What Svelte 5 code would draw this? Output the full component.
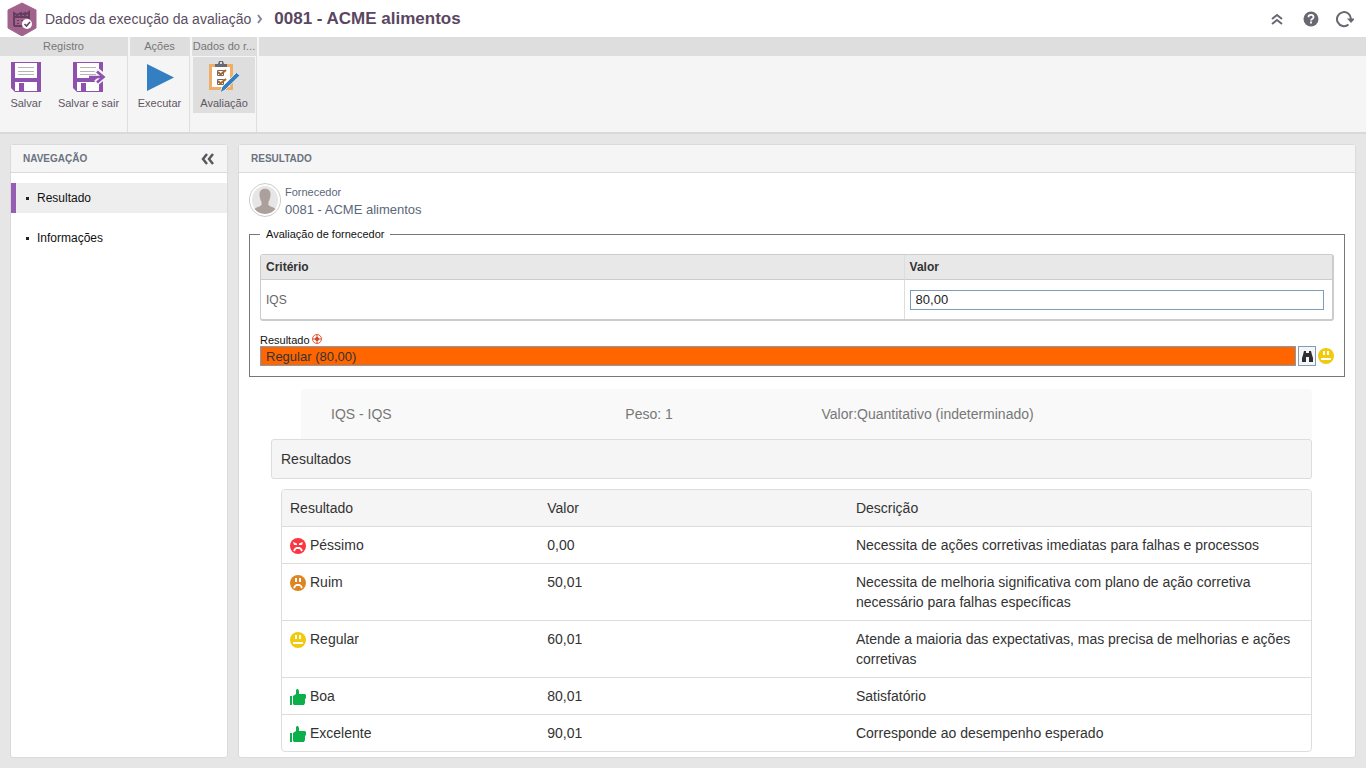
<script>
  let valor = "80,00";
  let resultado = "Regular (80,00)";
  let menuActivo = "Resultado";
  let menu = ["Resultado", "Informações"];

  const resultados = [
    { nome: "Péssimo", valor: "0,00", icono: "pessimo", descricao: "Necessita de ações corretivas imediatas para falhas e processos" },
    { nome: "Ruim", valor: "50,01", icono: "ruim", descricao: "Necessita de melhoria significativa com plano de ação corretiva necessário para falhas específicas" },
    { nome: "Regular", valor: "60,01", icono: "regular", descricao: "Atende a maioria das expectativas, mas precisa de melhorias e ações corretivas" },
    { nome: "Boa", valor: "80,01", icono: "boa", descricao: "Satisfatório" },
    { nome: "Excelente", valor: "90,01", icono: "boa", descricao: "Corresponde ao desempenho esperado" },
  ];
</script>

{#snippet disquete(sair)}
  <svg class="disquete" width="32" height="32" viewBox="0 0 32 32" aria-hidden="true">
    <path d="M1 1h30v30H5l-4-4z" fill="#8e52ae" />
    <path d="M5 2h22v15H5z" fill="#fff" />
    <path d="M8 6.500h16M8 10.500h16M8 13.500h16" stroke="#b5b5b5" />
    <path d="M5 21h22v9H5z" fill="#fff" />
    <path d="M9 22h5v8H9z" fill="#8e52ae" />
    {#if sair}
      <path d="M24 9l8 6.500-8 6.500" fill="none" stroke="#f5f5f5" stroke-width="6" />
      <path d="M17 16h15M25 10.500l6.500 5.500-6.500 5.500" fill="none" stroke="#8e52ae" stroke-width="2.600" />
    {/if}
  </svg>
{/snippet}

{#snippet rosto(tipo)}
  <svg class="rosto" width="16" height="16" viewBox="0 0 16 16" aria-hidden="true">
    {#if tipo === "boa"}
      <path d="M0 7h2v9H0zM3 7l3-2V1l1-1h1l1 2v3h6l1 1v3l-1 1v4l-1 2H4l-1-1z" fill="#0bb04b" />
    {:else if tipo === "pessimo"}
      <circle cx="8" cy="8" r="8" fill="#fb3640" />
      <path d="M3 4l4 1.500V7H4zM13 4L9 5.500V7h3z" fill="#fff" />
      <path d="M4 13l1-2 1.500-1h3l1.500 1 1 2" fill="none" stroke="#fff" stroke-width="1.800" />
    {:else if tipo === "ruim"}
      <circle cx="8" cy="8" r="8" fill="#df851f" />
      <path d="M5 3h2v4H5zM9 3h2v4H9z" fill="#fff" />
      <path d="M4 13l1-2 1.500-1h3l1.500 1 1 2" fill="none" stroke="#fff" stroke-width="1.800" />
    {:else}
      <circle cx="8" cy="8" r="8" fill="#f1c90d" />
      <path d="M5 3h2v4H5zM9 3h2v4H9zM3 10h10v2H3z" fill="#fff" />
    {/if}
  </svg>
{/snippet}

<div class="pagina">
  <header>
    <svg class="logo" width="30" height="34" viewBox="0 0 30 34" aria-hidden="true">
      <path d="M15 1l14 7v18l-14 8L1 26V8z" fill="#a1638c" stroke="#a1638c" stroke-linejoin="round" />
      <path d="M7 24V11l3 2 4-2v2l4-2v2l4-3v7M7 15h15M7 24h8" fill="none" stroke="#653d61" stroke-width="2" />
      <path d="M10 18h2v1h-2zM14 18h2v1h-2zM10 21h2v1h-2z" fill="#653d61" />
      <circle cx="20" cy="22" r="5" fill="#fff" />
      <path d="M17.500 22l2 2 3.500-4" fill="none" stroke="#653d61" stroke-width="1.600" />
    </svg>
    <a class="origem" href="#avaliacao">Dados da execução da avaliação</a>
    <svg class="seta" width="6" height="10" viewBox="0 0 6 10" aria-hidden="true">
      <path d="M1 1l3 4-3 4" fill="none" stroke="#898494" stroke-width="2" />
    </svg>
    <h1>0081 - ACME alimentos</h1>
    <div class="atalhos">
      <button aria-label="Recolher">
        <svg width="18" height="18" viewBox="0 0 18 18"><path d="M4 9l5-4 5 4M4 14l5-4 5 4" fill="none" stroke="#686873" stroke-width="2" /></svg>
      </button>
      <button aria-label="Ajuda">
        <svg width="18" height="18" viewBox="0 0 18 18">
          <circle cx="9" cy="9" r="7.500" fill="#686873" />
          <path d="M6.500 7.200c0-3 5-3 5 0 0 1.700-2.500 1.700-2.500 3.300M9 11.500v2" fill="none" stroke="#fff" stroke-width="1.800" />
        </svg>
      </button>
      <button aria-label="Atualizar">
        <svg width="18" height="18" viewBox="0 0 18 18">
          <path d="M12.500 14.500A7 7 0 1 1 15 9" fill="none" stroke="#686873" stroke-width="2" />
          <path d="M11 8.500h8L15 13z" fill="#686873" />
        </svg>
      </button>
    </div>
  </header>

  <div class="barra">
    <section class="grupo registro">
      <h2>Registro</h2>
      <div class="acoes">
        <button>{@render disquete(false)}<span>Salvar</span></button>
        <button>{@render disquete(true)}<span>Salvar e sair</span></button>
      </div>
    </section>
    <section class="grupo executar">
      <h2>Ações</h2>
      <div class="acoes">
        <button>
          <svg width="32" height="32" viewBox="0 0 32 32" aria-hidden="true"><path d="M3 3l27 13.500L3 30z" fill="#347fc1" /></svg>
          <span>Executar</span>
        </button>
      </div>
    </section>
    <section class="grupo dados">
      <h2>Dados do r...</h2>
      <div class="acoes">
        <button class="ativo">
          <svg width="32" height="32" viewBox="0 0 32 32" aria-hidden="true">
            <path d="M1 3h24v26H1z" fill="#eead68" />
            <path d="M4 6h18v20H4z" fill="#fff" />
            <path d="M7 3h3l1-3h4l1 3h3v3H7z" fill="#676973" />
            <path d="M12 1h2v2h-2z" fill="#dedede" />
            <path d="M9.500 9.500h6v5h-6zM9.500 18.500h6v5h-6z" fill="#fff" stroke="#676973" />
            <path d="M10 11l2.500 2.500L18 9M10 20l2.500 2.500L18 18" fill="none" stroke="#b0641e" stroke-width="2" />
            <path d="M12 32l2-6L28.500 11.500l3.500 3L17 29z" fill="#347fc1" stroke="#e6e6e6" />
          </svg>
          <span>Avaliação</span>
        </button>
      </div>
    </section>
    <div class="grupo resto"><div class="faixa"></div></div>
  </div>

  <div class="conteudo">
    <nav class="painel">
      <div class="titulo">
        <h2>NAVEGAÇÃO</h2>
        <button aria-label="Recolher navegação">
          <svg width="14" height="12" viewBox="0 0 14 12"><path d="M6 1L2 6l4 5M12 1L8 6l4 5" fill="none" stroke="#5b5660" stroke-width="2.500" /></svg>
        </button>
      </div>
      <ul>
        {#each menu as item}
          <li class:selecionado={item === menuActivo}>
            <a href="#{item}" on:click|preventDefault={() => (menuActivo = item)}>{item}</a>
          </li>
        {/each}
      </ul>
    </nav>

    <main class="painel">
      <div class="titulo"><h2>RESULTADO</h2></div>
      <div class="corpo">
        <div class="fornecedor">
          <svg width="32" height="34" viewBox="0 0 32 34" aria-hidden="true">
            <ellipse cx="16" cy="17" rx="15.500" ry="16.500" fill="#fff" stroke="#ccc" />
            <ellipse cx="16" cy="17" rx="13" ry="14" fill="#e6e6e6" />
            <path d="M10.500 11c0-7 11-7 11 0 0 4-1 6-2 8v3c2 2 5 2 7 4-6 6.500-15 6.500-21 0 2-2 5-2 7-4v-3c-1-2-2-4-2-8z" fill="#aba09c" />
          </svg>
          <div>
            <p class="rotulo">Fornecedor</p>
            <p class="nome">0081 - ACME alimentos</p>
          </div>
        </div>

        <fieldset>
          <legend>Avaliação de fornecedor</legend>
          <table class="criterios">
            <thead>
              <tr><th>Critério</th><th>Valor</th></tr>
            </thead>
            <tbody>
              <tr>
                <td><label for="iqs">IQS</label></td>
                <td><input id="iqs" type="text" bind:value={valor} /></td>
              </tr>
            </tbody>
          </table>

          <label class="obrigatorio" for="resultado">
            Resultado
            <svg width="10" height="10" viewBox="0 0 10 10" aria-hidden="true">
              <circle cx="5" cy="5" r="4.500" fill="#fff" stroke="#e0593a" />
              <path d="M5 1v8M1 5h8" stroke="#d8401f" />
              <circle cx="5" cy="5" r="2" fill="#d8401f" />
            </svg>
          </label>
          <div class="campo">
            <input id="resultado" type="text" bind:value={resultado} readonly />
            <button aria-label="Pesquisar">
              <svg width="11" height="11" viewBox="0 0 11 11"><path d="M2 0h2v2h3V0h2l1 4 1 3v4H7V6H4v5H0V7l1-3z" fill="#2f2f33" /></svg>
            </button>
            {@render rosto("regular")}
          </div>
        </fieldset>

        <div class="detalhe">
          <div class="peso">
            <span>IQS - IQS</span>
            <span>Peso: 1</span>
            <span>Valor:Quantitativo (indeterminado)</span>
          </div>
          <h3>Resultados</h3>
          <div class="quadro">
            <table class="resultados">
              <thead>
                <tr><th>Resultado</th><th>Valor</th><th>Descrição</th></tr>
              </thead>
              <tbody>
                {#each resultados as r}
                  <tr>
                    <td><div class="tipo">{@render rosto(r.icono)}{r.nome}</div></td>
                    <td>{r.valor}</td>
                    <td>{r.descricao}</td>
                  </tr>
                {/each}
              </tbody>
            </table>
          </div>
        </div>
      </div>
    </main>
  </div>
</div>

<style>
  :global(body) {
    background: #e6e6e6;
    font-family: "Liberation Sans", Arial, sans-serif;
    font-size: 12px;
    color: #333;
  }

  * {
    box-sizing: border-box;
  }

  h1, h2, h3, p, ul {
    margin: 0;
    padding: 0;
    font-weight: normal;
  }

  button {
    border: none;
    background: none;
    padding: 0;
    font: inherit;
    color: inherit;
    cursor: pointer;
  }

  a {
    color: inherit;
    text-decoration: none;
  }

  svg {
    display: block;
    flex: none;
  }

  .disquete {
    overflow: visible;
  }

  .pagina {
    display: flex;
    flex-direction: column;
    min-height: 100vh;
  }

  header {
    display: flex;
    align-items: center;
    height: 37px;
    padding: 0 12px 0 7px;
    background: #fff;
  }

  .origem {
    margin: 0 6px 0 8px;
    font-size: 14px;
    color: #5b4d62;
  }

  h1 {
    margin-left: 11px;
    font-size: 17px;
    font-weight: bold;
    color: #5b4662;
  }

  .atalhos {
    display: flex;
    gap: 16px;
    margin-left: auto;
  }

  .barra {
    display: flex;
    background: #f5f5f5;
    border-bottom: 2px solid #d9d9d9;
  }

  .grupo {
    height: 95px;
    border-right: 1px solid #dedede;
  }

  .grupo + .grupo {
    padding-left: 2px;
  }

  .grupo h2,
  .faixa {
    height: 19px;
    background: #dedede;
    font-size: 11px;
    line-height: 19px;
    text-align: center;
    white-space: nowrap;
    color: #777;
  }

  .registro {
    width: 128px;
  }

  .executar {
    width: 62px;
  }

  .dados {
    width: 67px;
  }

  .resto {
    flex: 1;
    border: none;
  }

  .acoes {
    display: flex;
    padding: 1px 1px 0;
  }

  .registro .acoes {
    padding: 1px 0 0 2px;
  }

  .acoes button {
    display: flex;
    flex: 1 1 auto;
    flex-direction: column;
    align-items: center;
    gap: 4px;
    height: 56px;
    padding-top: 4px;
    font-size: 11px;
    white-space: nowrap;
    color: #5f5663;
  }

  .acoes .ativo {
    background: #dedede;
  }

  .conteudo {
    display: flex;
    flex: 1;
    gap: 10px;
    padding: 10px;
  }

  .painel {
    border: 1px solid #dadada;
    border-radius: 3px;
    background: #fff;
  }

  nav {
    width: 218px;
  }

  main {
    flex: 1;
    min-width: 0;
  }

  .titulo {
    display: flex;
    align-items: center;
    justify-content: space-between;
    height: 28px;
    padding: 0 12px;
    border-bottom: 1px solid #dadada;
    background: #f5f5f5;
  }

  .titulo h2 {
    font-size: 10px;
    line-height: 12px;
    font-weight: bold;
    color: #6b7280;
  }

  nav ul {
    padding-top: 10px;
    list-style: none;
  }

  nav li {
    margin-bottom: 10px;
    border-left: 5px solid transparent;
  }

  nav li.selecionado {
    border-color: #955db3;
    background: #eee;
  }

  nav li a {
    display: flex;
    align-items: center;
    gap: 8px;
    height: 30px;
    padding-left: 10px;
    color: #111;
  }

  nav li a::before {
    content: "";
    width: 3px;
    height: 3px;
    background: #222;
  }

  .corpo {
    padding: 10px 10px 5px;
  }

  .fornecedor {
    display: flex;
    gap: 4px;
    color: #5a677a;
  }

  .rotulo {
    font-size: 11px;
    line-height: 18px;
  }

  .nome {
    font-size: 13px;
    line-height: 18px;
  }

  fieldset {
    margin: 8px 0 0;
    padding: 13px 10px 10px;
    border: 1px solid #777;
  }

  legend {
    padding: 0 6px;
    font-size: 11px;
    line-height: 14px;
    color: #111;
  }

  .criterios {
    width: 100%;
    border: 1px solid #ccc;
    border-right-width: 2px;
    border-bottom-width: 2px;
    border-radius: 3px;
    border-spacing: 0;
    table-layout: fixed;
  }

  .criterios th {
    height: 25px;
    padding: 0 5px;
    border-bottom: 1px solid #ccc;
    background: #e8e8e8;
    text-align: left;
  }

  .criterios td {
    height: 39px;
    padding: 0 5px;
    color: #666;
  }

  .criterios th:first-child {
    width: 60%;
  }

  .criterios tr > :last-child {
    padding-right: 8px;
    border-left: 1px solid #ddd;
  }

  input {
    display: block;
    width: 100%;
    height: 20px;
    padding: 0 5px;
    border: 1px solid #7f9db9;
    font-family: inherit;
    font-size: 13px;
    color: #222;
  }

  .obrigatorio {
    display: flex;
    align-items: flex-start;
    gap: 2px;
    margin-top: 13px;
    font-size: 11px;
    line-height: 12px;
    color: #111;
  }

  .campo {
    display: flex;
    align-items: center;
    gap: 2px;
  }

  .campo input {
    flex: 1;
    background: #ff6600;
    color: #333;
  }

  .campo button {
    display: grid;
    place-items: center;
    width: 18px;
    height: 20px;
    border: 1px solid #7f9db9;
    background: #f5f5f5;
  }

  .detalhe {
    padding: 12px 33px 0 22px;
    font-size: 14px;
    line-height: 20px;
  }

  .peso {
    display: grid;
    grid-template-columns: 3fr 2fr 5fr;
    margin-left: 30px;
    padding: 15px 0 15px 30px;
    border-radius: 4px 4px 0 0;
    background: #f9f9f9;
    color: #777;
  }

  h3 {
    padding: 9px;
    border: 1px solid #ddd;
    border-radius: 3px;
    background: #f5f5f5;
    font-size: 14px;
  }

  .quadro {
    margin: 10px 0 0 10px;
    overflow: hidden;
    border: 1px solid #ddd;
    border-radius: 4px;
  }

  .resultados {
    width: 100%;
    border-collapse: collapse;
    table-layout: fixed;
  }

  .resultados th,
  .resultados td {
    padding: 8px;
    font-weight: normal;
    text-align: left;
    vertical-align: top;
  }

  .resultados th {
    width: 45%;
    background: #f5f5f5;
  }

  .resultados th:nth-child(1) {
    width: 25%;
  }

  .resultados th:nth-child(2) {
    width: 30%;
  }

  .resultados td {
    border-top: 1px solid #ddd;
  }

  .tipo {
    display: flex;
    align-items: flex-end;
    gap: 4px;
  }

  .tipo .rosto {
    margin-bottom: 1px;
  }
</style>
